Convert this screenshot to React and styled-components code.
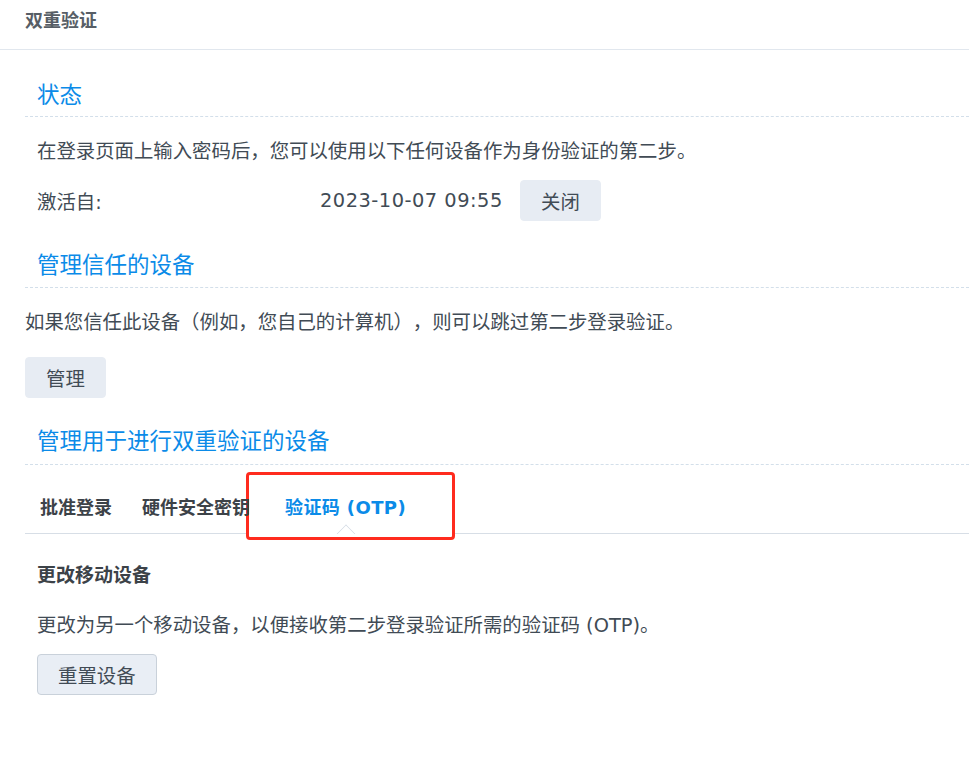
import styled, { createGlobalStyle } from "styled-components"

const Global = createGlobalStyle`
	body {
		margin: 0;
		background: #fff;
		font-family: "DejaVu Sans", "Noto Sans CJK SC", sans-serif;
		color: #414b55;
		text-spacing-trim: space-all;
	}
`

const Page = styled.div`
	width: 969px;
	height: 769px;
	overflow: hidden;
	background: #fff;
`

const Header = styled.header`
	height: 50px;
	box-sizing: border-box;
	border-bottom: 1px solid #e1e7ee;
	padding: 10px 0 0 25px;
	font-size: 18px;
	font-weight: bold;
	color: #575e66;
	line-height: 22px;
`

const Body = styled.div`
	padding-left: 25px;
`

const SectionTitle = styled.h2`
	margin: 0;
	padding: ${(p) => p.$top}px 0 ${(p) => p.$bottom || 7}px 12px;
	font-size: 22.5px;
	font-weight: normal;
	line-height: 28px;
	color: #0b8be8;
	border-bottom: 1px dashed #d3dfea;
`

const Text = styled.p`
	margin: 0;
	padding-left: ${(p) => (p.$indent ? 12 : 0)}px;
	font-size: 19.4px;
	line-height: 24px;
	margin-top: ${(p) => p.$top || 0}px;
`

const Row = styled.div`
	display: flex;
	align-items: center;
	padding-left: 12px;
	margin-top: ${(p) => p.$top || 0}px;
	font-size: 19.4px;
`

const Label = styled.span`
	width: 283px;
`

const DateValue = styled.span`
	width: 200px;
	letter-spacing: 0.5px;
	color: #414b55;
`

const Button = styled.button`
	height: 41px;
	padding: 0 ${(p) => p.$pad || 20}px;
	border: 1px solid ${(p) => (p.$bordered ? "#c9d1da" : "#e7ecf3")};
	border-radius: 4px;
	background: ${(p) => (p.$bordered ? "#e9eef5" : "#e7ecf3")};
	color: #414b55;
	font-family: "Noto Sans CJK SC", sans-serif;
	font-size: 19.4px;
	cursor: pointer;
	margin-left: ${(p) => p.$left || 0}px;
	margin-top: ${(p) => p.$top || 0}px;
`

const Tabs = styled.div`
	display: flex;
	height: 69px;
	border-bottom: 1px solid #d7dee6;
	box-sizing: border-box;
`

const Tab = styled.div`
	position: relative;
	display: flex;
	align-items: center;
	padding: 14px ${(p) => p.$pad || 15}px 0;
	margin-left: ${(p) => p.$shift || 0}px;
	font-size: 18px;
	font-weight: bold;
	color: ${(p) => (p.$active ? "#0b8be8" : "#3c4248")};
	white-space: nowrap;
`

const TabLabel = styled.span`
	position: relative;
	z-index: 2;
	letter-spacing: ${(p) => (p.$wide ? 0.4 : 0)}px;
`

const Highlight = styled.span`
	position: absolute;
	left: -3px;
	right: -13px;
	top: 7px;
	bottom: -7px;
	border: 3px solid #ff2b1e;
	border-radius: 4px;
	background: #fff;
	z-index: 1;
`

const Notch = styled.span`
	position: absolute;
	left: 50%;
	bottom: -8px;
	width: 14px;
	height: 14px;
	margin-left: -7px;
	box-sizing: border-box;
	background: #fff;
	border-left: 1px solid #d7dee6;
	border-top: 1px solid #d7dee6;
	transform: rotate(45deg);
	clip-path: polygon(0 0, 100% 0, 0 100%);
	z-index: 2;
`

const SubTitle = styled.h3`
	margin: 29px 0 0 12px;
	font-size: 19px;
	line-height: 24px;
	font-weight: bold;
	color: #3c4248;
`

function App() {
	return (
		<Page>
			<Global />
			<Header>双重验证</Header>
			<Body>
				<SectionTitle $top={31}>状态</SectionTitle>
				<Text $indent $top={23}>在登录页面上输入密码后，您可以使用以下任何设备作为身份验证的第二步。</Text>
				<Row $top={16}>
					<Label>激活自:</Label>
					<DateValue>2023-10-07 09:55</DateValue>
					<Button>关闭</Button>
				</Row>
				<SectionTitle $top={30} $bottom={8}>管理信任的设备</SectionTitle>
				<Text $top={23}>如果您信任此设备（例如，您自己的计算机），则可以跳过第二步登录验证。</Text>
				<Button $top={22}>管理</Button>
				<SectionTitle $top={29} $bottom={9}>管理用于进行双重验证的设备</SectionTitle>
				<Tabs>
					<Tab>
						<TabLabel>批准登录</TabLabel>
					</Tab>
					<Tab>
						<TabLabel>硬件安全密钥</TabLabel>
					</Tab>
					<Tab $active $pad={36} $shift={-16}>
						<Highlight />
						<TabLabel $wide>验证码 (OTP)</TabLabel>
						<Notch />
					</Tab>
				</Tabs>
				<SubTitle>更改移动设备</SubTitle>
				<Text $indent $top={27}>更改为另一个移动设备，以便接收第二步登录验证所需的验证码 (OTP)。</Text>
				<Button $bordered $left={12} $top={16}>重置设备</Button>
			</Body>
		</Page>
	)
}

export default App
